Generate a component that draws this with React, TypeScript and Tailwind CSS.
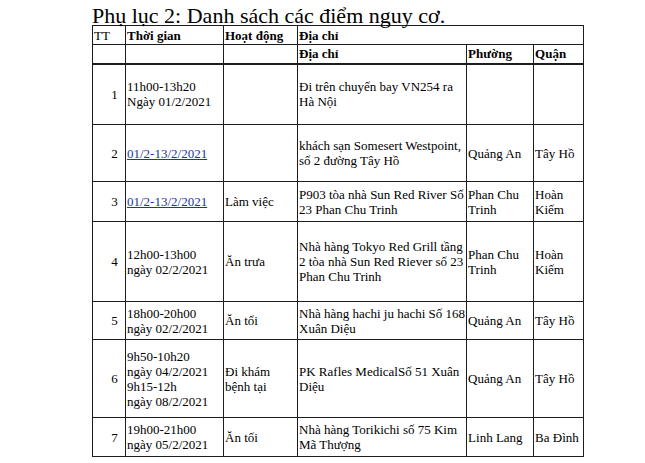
const rows = [
  {
    tt: '1',
    time: ['11h00-13h20', 'Ngày 01/2/2021'],
    act: [],
    addr: ['Đi trên chuyến bay VN254 ra', 'Hà Nội'],
    ward: [],
    dist: [],
    h: 'h-[61px]',
  },
  {
    tt: '2',
    time: ['01/2-13/2/2021'],
    link: true,
    act: [],
    addr: ['khách sạn Somesert Westpoint,', 'số 2 đường Tây Hồ'],
    ward: ['Quảng An'],
    dist: ['Tây Hồ'],
    h: 'h-[57px]',
  },
  {
    tt: '3',
    time: ['01/2-13/2/2021'],
    link: true,
    act: ['Làm việc'],
    addr: ['P903 tòa nhà Sun Red River Số', '23 Phan Chu Trinh'],
    ward: ['Phan Chu', 'Trinh'],
    dist: ['Hoàn', 'Kiếm'],
    h: 'h-[40px]',
  },
  {
    tt: '4',
    time: ['12h00-13h00', 'ngày 02/2/2021'],
    act: ['Ăn trưa'],
    addr: ['Nhà hàng Tokyo Red Grill tầng', '2 tòa nhà Sun Red Riever số 23', 'Phan Chu Trinh'],
    ward: ['Phan Chu', 'Trinh'],
    dist: ['Hoàn', 'Kiếm'],
    h: 'h-[80px]',
  },
  {
    tt: '5',
    time: ['18h00-20h00', 'ngày 02/2/2021'],
    act: ['Ăn tối'],
    addr: ['Nhà hàng hachi ju hachi Số 168', 'Xuân Diệu'],
    ward: ['Quảng An'],
    dist: ['Tây Hồ'],
    h: 'h-[38px]',
  },
  {
    tt: '6',
    time: ['9h50-10h20', 'ngày 04/2/2021', '9h15-12h', 'ngày 08/2/2021'],
    act: ['Đi khám', 'bệnh tại'],
    addr: ['PK Rafles MedicalSố 51 Xuân', 'Diệu'],
    ward: ['Quảng An'],
    dist: ['Tây Hồ'],
    h: 'h-[78px]',
  },
  {
    tt: '7',
    time: ['19h00-21h00', 'ngày 05/2/2021'],
    act: ['Ăn tối'],
    addr: ['Nhà hàng Torikichi số 75 Kim', 'Mã Thượng'],
    ward: ['Linh Lang'],
    dist: ['Ba Đình'],
    h: 'h-[39px]',
  },
];

function Lines({ lines }: { lines: string[] }) {
  return (
    <>
      {lines.map((l, i) => (
        <div key={i}>{l}</div>
      ))}
    </>
  );
}

const cell = 'border border-[#1c1c1c] px-[1px] align-middle whitespace-nowrap';

export default function App() {
  return (
    <div className="min-h-[463px] w-[645px] bg-white text-black font-['Liberation_Serif',serif]">
      <div className="pl-[92px] pt-[6px] text-[22px] leading-[19px] whitespace-nowrap">
        Phụ lục 2: Danh sách các điểm nguy cơ.
      </div>
      <table className="ml-[92px] table-fixed border-collapse text-[13px] leading-[15px]">
        <colgroup>
          <col className="w-[33px]" />
          <col className="w-[98px]" />
          <col className="w-[74px]" />
          <col className="w-[169px]" />
          <col className="w-[67px]" />
          <col className="w-[50px]" />
        </colgroup>
        <thead className="font-bold">
          <tr className="h-[19px]">
            <td className={`${cell} font-normal`}>TT</td>
            <td className={cell}>Thời gian</td>
            <td className={cell}>Hoạt động</td>
            <td className={cell} colSpan={3}>
              Địa chỉ
            </td>
          </tr>
          <tr className="h-[19px]">
            <td className={`${cell} border-b-2`}></td>
            <td className={`${cell} border-b-2`}></td>
            <td className={`${cell} border-b-2`}></td>
            <td className={`${cell} border-b-2`}>Địa chỉ</td>
            <td className={`${cell} border-b-2`}>Phường</td>
            <td className={`${cell} border-b-2`}>Quận</td>
          </tr>
        </thead>
        <tbody>
          {rows.map((r) => (
            <tr key={r.tt} className={r.h}>
              <td className={`${cell} pl-[12px] text-center`}>{r.tt}</td>
              <td className={cell}>
                {r.link ? (
                  <span className="text-[#2233aa] underline">{r.time[0]}</span>
                ) : (
                  <Lines lines={r.time} />
                )}
              </td>
              <td className={cell}>
                <Lines lines={r.act} />
              </td>
              <td className={cell}>
                <Lines lines={r.addr} />
              </td>
              <td className={cell}>
                <Lines lines={r.ward} />
              </td>
              <td className={cell}>
                <Lines lines={r.dist} />
              </td>
            </tr>
          ))}
        </tbody>
      </table>
    </div>
  );
}
